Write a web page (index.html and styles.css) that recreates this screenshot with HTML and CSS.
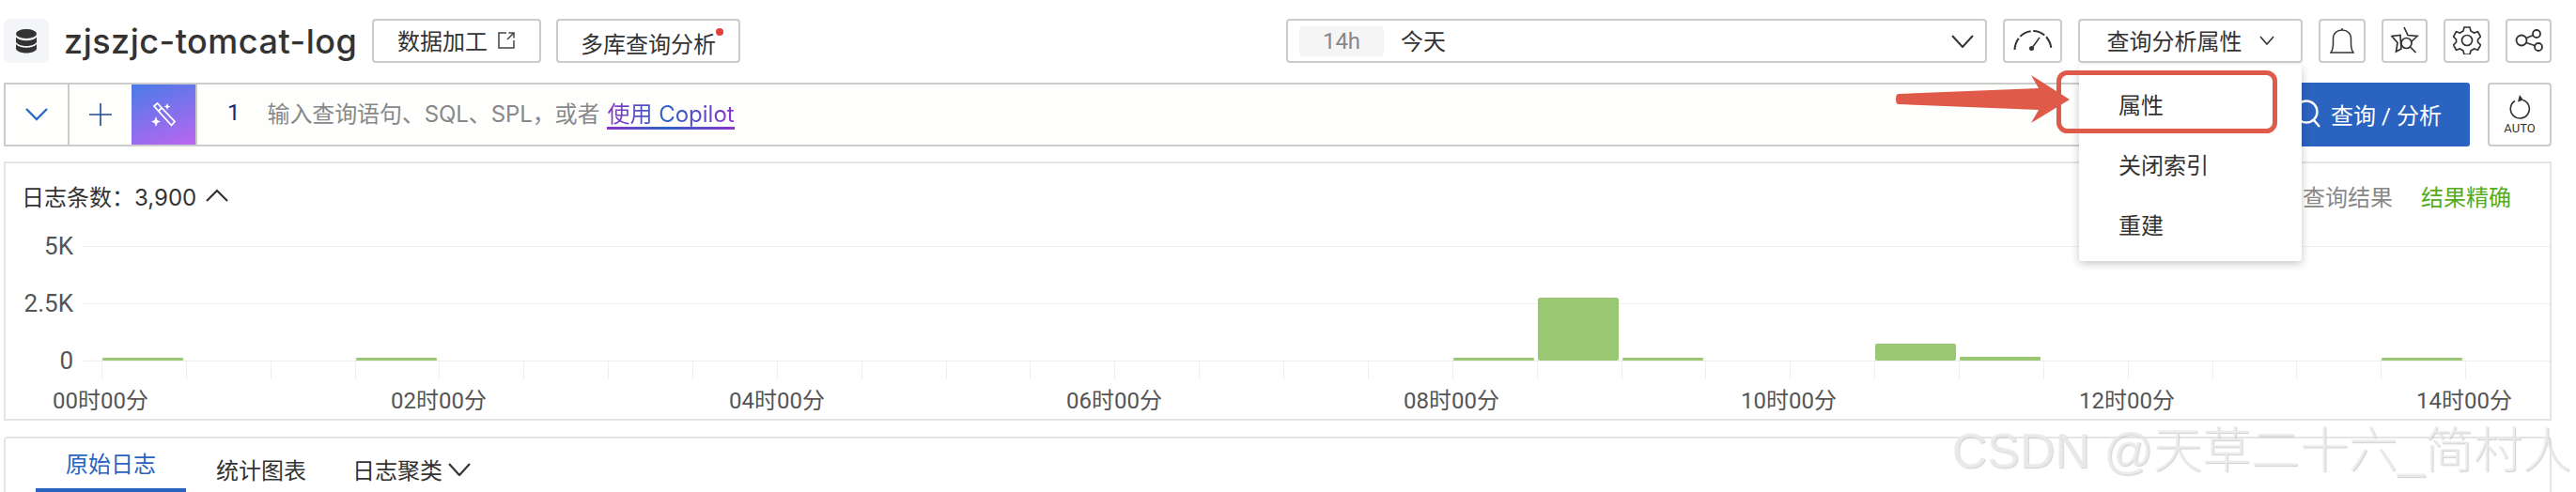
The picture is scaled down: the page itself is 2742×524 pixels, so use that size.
FILE: index.html
```html
<!DOCTYPE html>
<html lang="zh-CN">
<head>
    <meta charset="UTF-8">
    <title>zjszjc-tomcat-log</title>
    <link rel="stylesheet" href="styles.css">
</head>
<body>
    <header class="topbar">
        <span class="store-icon">
            <svg width="24" height="26" viewBox="0 0 24 26" fill="#333">
                <ellipse cx="12" cy="5" rx="11" ry="5"/>
                <path d="M1 8.500c2 2.600 6 3.800 11 3.800s9-1.200 11-3.800v4.500c0 2.800-5 5-11 5s-11-2.200-11-5z"/>
                <path d="M1 16c2 2.600 6 3.800 11 3.800s9-1.200 11-3.800v4.500c0 2.800-5 5-11 5s-11-2.200-11-5z"/>
            </svg>
        </span>
        <h1 class="store-name">zjszjc-tomcat-log</h1>
        <button class="btn btn-etl">数据加工
            <svg width="20" height="20" viewBox="0 0 20 20" fill="none" stroke="#444" stroke-width="1.500">
                <path d="M10 2H2v16h16v-8M11 9l7-7M12.500 2H18v5.500"/>
            </svg>
        </button>
        <button class="btn btn-multi">多库查询分析<i class="red-dot"></i></button>

        <div class="time-picker">
            <span class="time-chip">14h</span>
            <span class="time-label">今天</span>
            <svg class="time-arrow" width="24" height="14" viewBox="0 0 24 14" fill="none" stroke="#333" stroke-width="2">
                <path d="M1 1l11 12L23 1"/>
            </svg>
        </div>
        <button class="btn btn-gauge">
            <svg width="42" height="24" viewBox="0 0 42 24" fill="none" stroke="#333" stroke-width="2">
                <path d="M1.500 22C2 11 10 2 21 2s19 9 19.500 20" stroke-dasharray="13 2.500"/>
                <path d="M28 9l-8 11" stroke-width="1.500"/>
                <circle cx="19.500" cy="20.500" r="2.500" fill="#333" stroke="none"/>
            </svg>
        </button>
        <div class="attr-wrap">
            <button class="btn btn-attr">查询分析属性
                <svg width="16" height="10" viewBox="0 0 16 10" fill="none" stroke="#333" stroke-width="1.600">
                    <path d="M1 1l7 8 7-8"/>
                </svg>
            </button>
            <ul class="attr-menu">
                <li>属性</li>
                <li>关闭索引</li>
                <li>重建</li>
            </ul>
        </div>
        <button class="btn btn-icon btn-bell">
            <svg width="26" height="28" viewBox="0 0 26 28" fill="none" stroke="#333" stroke-width="1.500">
                <path d="M1 27c1.500-2 2.500-5 2.500-10V12c0-5.500 4-9 9.500-9s9.500 3.500 9.500 9v5c0 5 1 8 2.500 10zM13 3V1"/>
            </svg>
        </button>
        <button class="btn btn-icon">
            <svg width="30" height="29" viewBox="0 0 30 29" fill="none" stroke="#333" stroke-width="1.700">
                <path d="M14 1l4 8.500 10 1-6.500 6M11 24l-5.500 3 1.500-9.500L1 10.500l9-1z"/>
                <circle cx="16.500" cy="18" r="5.500"/>
                <path d="M20.500 22l6 6"/>
            </svg>
        </button>
        <button class="btn btn-icon">
            <svg width="30" height="30" viewBox="0 0 30 30" fill="none" stroke="#333" stroke-width="1.700">
                <path d="M12 1h6l1 4 3.500 2 4-1.200 3 5.200-3 3v3l3 3-3 5.200-4-1.200-3.500 2-1 4h-6l-1-4-3.500-2-4 1.200-3-5.200 3-3v-3l-3-3 3-5.200 4 1.200 3.500-2z"/>
                <circle cx="15" cy="15" r="5.500"/>
            </svg>
        </button>
        <button class="btn btn-icon">
            <svg width="30" height="24" viewBox="0 0 30 24" fill="none" stroke="#333" stroke-width="1.800">
                <circle cx="7" cy="12" r="5.500"/>
                <circle cx="23" cy="5" r="4"/>
                <circle cx="25" cy="19" r="4"/>
                <path d="M12 9.500l7.500-3M12 14.500l9 3"/>
            </svg>
        </button>
    </header>

    <section class="query-row">
        <div class="query-box">
            <span class="query-cell query-toggle">
                <svg width="24" height="14" viewBox="0 0 24 14" fill="none" stroke="#2b6cc4" stroke-width="2.400">
                    <path d="M1 1l11 11L23 1"/>
                </svg>
            </span>
            <span class="query-cell query-add">
                <svg width="24" height="24" viewBox="0 0 24 24" stroke="#1f4b8e" stroke-width="1.600">
                    <path d="M12 0v24M0 12h24"/>
                </svg>
            </span>
            <span class="query-magic">
                <svg width="28" height="26" viewBox="0 0 28 26" fill="none" stroke="#fff" stroke-width="1.800">
                    <path d="M4 4l3.500-3L26 20.500 22.500 24.500zM8.500 9.500L12 6"/>
                    <path d="M18 1l1 2.500 2.500 1-2.500 1-1 2.500-1-2.500-2.500-1 2.500-1zM6 15l1.500 4 3.500 1.500-3.500 1.500-1.500 4-1.500-4-3.500-1.500 3.500-1.500z" fill="#fff" stroke="none"/>
                </svg>
            </span>
            <span class="line-no">1</span>
            <span class="query-hint">输入查询语句、SQL、SPL，或者</span>
            <a class="copilot-link">使用 Copilot</a>
        </div>
        <button class="query-btn">
            <svg width="30" height="32" viewBox="0 0 30 32" fill="none" stroke="#fff" stroke-width="2.400">
                <circle cx="14" cy="14" r="11.500"/>
                <path d="M22 23l6 7"/>
            </svg>
            查询 / 分析
        </button>
        <button class="auto-btn">
            <svg width="24" height="26" viewBox="0 0 24 26" fill="none" stroke="#333" stroke-width="1.600">
                <path d="M15.500 5.500A10 10 0 1 1 7 6.500"/>
                <path d="M12 0l4 5.500-6 2z" fill="#333" stroke="none"/>
            </svg>
            <span>AUTO</span>
        </button>
    </section>

    <section class="chart-panel">
        <div class="chart-head">
            <span class="chart-count">日志条数：3,900
                <svg width="24" height="14" viewBox="0 0 24 14" fill="none" stroke="#333" stroke-width="2.200">
                    <path d="M1 13L12 2l11 11"/>
                </svg>
            </span>
            <span class="chart-status">查询结果</span>
            <span class="chart-exact">结果精确</span>
        </div>
        <svg class="chart-plot" width="2708" height="206" viewBox="6 240 2708 206">
            <g class="grid">
                <path d="M88 262.500H2714M88 323.500H2714M88 384.500H2714"/>
                <path d="M108.500 384v20M198.500 384v20M288.500 384v20M378.500 384v20M467.500 384v20M557.500 384v20M647.500 384v20M737.500 384v20M827.500 384v20M917.500 384v20M1007.500 384v20M1096.500 384v20M1186.500 384v20M1276.500 384v20M1366.500 384v20M1456.500 384v20M1546.500 384v20M1636.500 384v20M1726.500 384v20M1815.500 384v20M1905.500 384v20M1995.500 384v20M2085.500 384v20M2175.500 384v20M2265.500 384v20M2355.500 384v20M2444.500 384v20M2534.500 384v20M2624.500 384v20"/>
            </g>
            <g class="bars">
                <rect x="109" y="381" width="86" height="3" rx="1"/>
                <rect x="379" y="381" width="86" height="3" rx="1"/>
                <rect x="1547" y="381" width="86" height="3" rx="1"/>
                <rect x="1637" y="317" width="86" height="67" rx="2"/>
                <rect x="1727" y="381" width="86" height="3" rx="1"/>
                <rect x="1996" y="366" width="86" height="18" rx="2"/>
                <rect x="2086" y="380" width="86" height="4" rx="1"/>
                <rect x="2535" y="381" width="86" height="3" rx="1"/>
            </g>
            <g class="y-labels">
                <text x="78" y="271">5K</text>
                <text x="78" y="332">2.5K</text>
                <text x="78" y="393">0</text>
            </g>
            <g class="x-labels">
                <text x="107" y="435">00时00分</text>
                <text x="467" y="435">02时00分</text>
                <text x="827" y="435">04时00分</text>
                <text x="1186" y="435">06时00分</text>
                <text x="1545" y="435">08时00分</text>
                <text x="1904" y="435">10时00分</text>
                <text x="2264" y="435">12时00分</text>
                <text x="2623" y="435">14时00分</text>
            </g>
        </svg>
    </section>

    <section class="tabs-panel">
        <a class="tab tab-active">原始日志</a>
        <a class="tab">统计图表</a>
        <a class="tab">日志聚类
            <svg width="24" height="14" viewBox="0 0 24 14" fill="none" stroke="#333" stroke-width="2.200">
                <path d="M1 1l11 12L23 1"/>
            </svg>
        </a>
    </section>

    <!-- annotation drawn on top of the screenshot -->
    <svg class="callout" width="2742" height="524" viewBox="0 0 2742 524">
        <path d="M2021 100L2170 94 2162 80 2203 106 2162 131 2170 117 2021 111Q2018 111 2018 105.500 2018 100 2021 100z" fill="#e05a4a"/>
        <rect x="2191.500" y="77.500" width="230" height="62" rx="9" fill="none" stroke="#e05a4a" stroke-width="5"/>
    </svg>
    <div class="watermark">CSDN @天草二十六_简村人</div>
</body>
</html>
```

FILE: styles.css
```css
* {
    box-sizing: border-box;
}

html, body {
    margin: 0;
    height: 524px;
    overflow: hidden;
}

body {
    position: relative;
    padding: 20px 26px 0 4px;
    background-color: #fff;
    color: #333;
    font-family: Roboto, "Noto Sans CJK SC", sans-serif;
    font-size: 24px;
}

button {
    font: inherit;
    color: inherit;
    background: #fff;
    cursor: pointer;
    padding: 0;
}

/* top bar */
.topbar {
    display: flex;
    align-items: center;
    height: 47px;
    gap: 17px;
}

.store-icon {
    display: flex;
    align-items: center;
    justify-content: center;
    width: 48px;
    height: 47px;
    background-color: #f4f5f8;
    border-radius: 7px;
}

.store-name {
    margin: 0 0 0 -1px;
    width: 311px;
    font-family: Inter, sans-serif;
    font-size: 36px;
    font-weight: 500;
    letter-spacing: 0.5px;
    white-space: nowrap;
}

.btn {
    display: flex;
    align-items: center;
    justify-content: center;
    height: 47px;
    padding-bottom: 2px;
    border: 2px solid #ccc;
    border-radius: 4px;
}

.btn-etl {
    width: 180px;
    gap: 10px;
}

.btn-multi {
    position: relative;
    width: 196px;
    padding: 4px 0 0;
    margin-left: -1px;
}

.red-dot {
    position: absolute;
    top: 8px;
    right: 16px;
    width: 8px;
    height: 8px;
    border-radius: 50%;
    background-color: #e0403a;
}

.time-picker {
    display: flex;
    align-items: center;
    width: 746px;
    height: 47px;
    margin-left: auto;
    padding: 0 12px;
    border: 2px solid #ccc;
    border-radius: 4px;
}

.time-chip {
    width: 90px;
    height: 32px;
    line-height: 32px;
    text-align: center;
    color: #888;
    background-color: #f5f5f5;
    border-radius: 4px;
}

.time-label {
    margin-left: 18px;
    margin-top: -2px;
    flex: 1;
}

.btn-gauge {
    width: 63px;
}

.attr-wrap {
    position: relative;
}

.btn-attr {
    width: 239px;
    gap: 18px;
}

.attr-menu {
    position: absolute;
    z-index: 5;
    top: 49px;
    left: 1px;
    width: 237px;
    height: 209px;
    margin: 0;
    padding: 12px 0 0;
    list-style: none;
    background-color: #fff;
    border-radius: 3px;
    box-shadow: 0 3px 10px rgba(0, 0, 0, 0.22);
}

.attr-menu li {
    height: 64px;
    line-height: 64px;
    padding-left: 42px;
}

.btn-icon {
    width: 49px;
}

.btn-bell {
    width: 50px;
}

/* query row */
.query-row {
    display: flex;
    height: 68px;
    margin-top: 21px;
    gap: 19px;
}

.query-box {
    flex: 1;
    display: flex;
    align-items: center;
    height: 68px;
    margin-right: -19px;
    border: 2px solid #ccc;
    background-color: #fefefd;
}

.query-cell {
    display: flex;
    align-items: center;
    justify-content: center;
    height: 100%;
}

.query-toggle {
    width: 68px;
    border-right: 2px solid #ccc;
}

.query-add {
    width: 66px;
}

.query-magic {
    display: flex;
    align-items: center;
    justify-content: center;
    width: 68px;
    height: 100%;
    background: linear-gradient(160deg, #4a7be8, #bb66f0);
    border-right: 2px solid #ccc;
    box-sizing: content-box;
}

.line-no {
    margin-left: 32px;
    margin-top: -5px;
    color: #0b2a78;
}

.query-hint {
    margin-left: 29px;
    margin-top: -5px;
    font-family: Inter, "Noto Sans CJK SC", sans-serif;
    letter-spacing: -0.1px;
    color: #888;
}

.copilot-link {
    margin-left: 8px;
    margin-top: -5px;
    font-family: Inter, "Noto Sans CJK SC", sans-serif;
    color: transparent;
    background: linear-gradient(90deg, #8b35c9, #2b63c1 45%, #8b35c9);
    -webkit-background-clip: text;
    background-clip: text;
    position: relative;
}

.copilot-link::after {
    content: "";
    position: absolute;
    left: 0;
    right: 0;
    bottom: -1px;
    height: 3px;
    background: linear-gradient(90deg, #8b35c9, #2b63c1 45%, #8b35c9);
}

.query-btn {
    display: flex;
    align-items: center;
    justify-content: center;
    gap: 10px;
    width: 212px;
    height: 68px;
    padding: 0 6px 2px 0;
    border: none;
    border-radius: 3px;
    background-color: #2b63c1;
    color: #fff;
}

.auto-btn {
    display: flex;
    flex-direction: column;
    align-items: center;
    justify-content: center;
    width: 68px;
    height: 68px;
    border: 2px solid #ccc;
    border-radius: 4px;
    font-size: 13px;
    gap: 2px;
}

/* histogram */
.chart-panel {
    height: 276px;
    margin-top: 16px;
    border: 2px solid #e5e5e5;
}

.chart-head {
    display: flex;
    align-items: center;
    height: 66px;
    padding: 2px 41px 0 17px;
}

.chart-count {
    display: flex;
    align-items: center;
    gap: 10px;
    flex: 1;
    font-family: Inter, "Noto Sans CJK SC", sans-serif;
}

.chart-status {
    color: #888;
}

.chart-exact {
    margin-left: 30px;
    color: #52ad21;
}

.chart-plot {
    display: block;
}

.grid path {
    stroke: #eee;
    stroke-width: 1;
    fill: none;
}

.bars rect {
    fill: #9ac872;
}

.y-labels text {
    text-anchor: end;
    fill: #555;
    font-size: 26px;
}

.x-labels text {
    text-anchor: middle;
    fill: #555;
}

/* tabs */
.tabs-panel {
    display: flex;
    height: 80px;
    margin-top: 17px;
    padding-left: 32px;
    border: 2px solid #e5e5e5;
    border-radius: 4px 4px 0 0;
}

.tab {
    display: flex;
    align-items: center;
    gap: 6px;
    height: 57px;
    padding-top: 8px;
    margin-right: 49px;
}

.tab-active {
    width: 160px;
    justify-content: center;
    margin-right: 32px;
    padding: 0 0 2px;
    color: #2b63c1;
    border-bottom: 4px solid #2b63c1;
}

/* overlays */
.callout {
    position: absolute;
    z-index: 6;
    top: 0;
    left: 0;
    pointer-events: none;
}

.watermark {
    position: absolute;
    z-index: 7;
    right: 5px;
    top: 438px;
    font-family: "Liberation Sans", "Noto Sans CJK SC", sans-serif;
    font-size: 52px;
    font-weight: 300;
    color: rgba(236, 236, 236, 0.85);
    text-shadow: 1px 1px 1px rgba(180, 180, 180, 0.6);
    white-space: nowrap;
}
```
